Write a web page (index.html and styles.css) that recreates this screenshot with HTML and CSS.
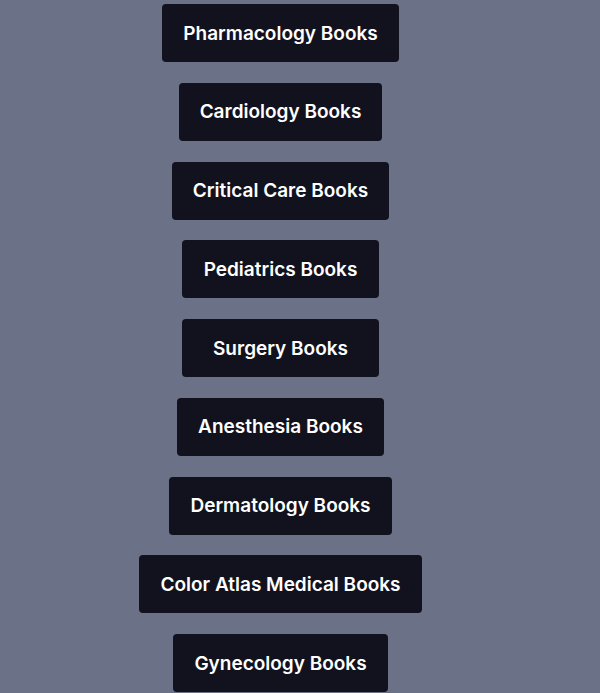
FILE: index.html
```html
<!DOCTYPE html>
<html lang="en">
<head>
<meta charset="utf-8">
<title>Medical Books</title>
<link rel="stylesheet" href="styles.css">
</head>
<body>
<nav class="list">
  <a class="btn" href="#">Pharmacology Books</a>
  <a class="btn" href="#">Cardiology Books</a>
  <a class="btn" href="#">Critical Care Books</a>
  <a class="btn" href="#">Pediatrics Books</a>
  <a class="btn" href="#">Surgery Books</a>
  <a class="btn" href="#">Anesthesia Books</a>
  <a class="btn" href="#">Dermatology Books</a>
  <a class="btn" href="#">Color Atlas Medical Books</a>
  <a class="btn" href="#">Gynecology Books</a>
</nav>
</body>
</html>
```

FILE: styles.css
```css
html, body {
  margin: 0;
  padding: 0;
  background: #6b7186;
}
body {
  font-family: Inter, "Liberation Sans", sans-serif;
}
.list {
  width: 561px;
  display: flex;
  flex-direction: column;
  align-items: center;
  gap: 20.75px;
  padding-top: 4px;
}
.btn {
  display: flex;
  align-items: center;
  justify-content: center;
  height: 58px;
  min-width: 197px;
  padding: 0 21px;
  box-sizing: border-box;
  background: #11121d;
  color: #ffffff;
  border-radius: 4px;
  font-size: 19px;
  font-weight: 600;
  text-decoration: none;
  white-space: nowrap;
}
```
